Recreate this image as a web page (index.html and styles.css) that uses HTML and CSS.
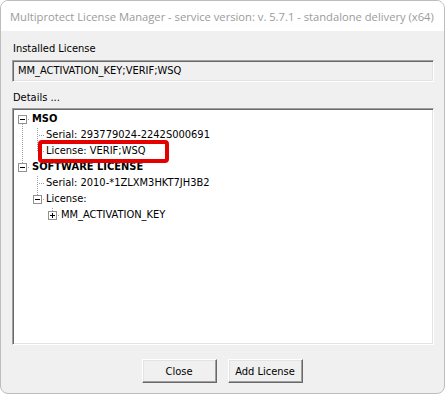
FILE: index.html
```html
<!DOCTYPE html>
<html lang="en">
<head>
	<meta charset="UTF-8">
	<title>Multiprotect License Manager</title>
	<link rel="stylesheet" href="styles.css">
</head>
<body>

<div class="window">
	<div class="titlebar">Multiprotect License Manager - service version: v. 5.7.1 - standalone delivery (x64)</div>

	<div class="content">
		<div class="caption">Installed License</div>
		<div class="field">MM_ACTIVATION_KEY;VERIF;WSQ</div>

		<div class="caption caption-details">Details ...</div>
		<div class="tree">
			<!-- MSO -->
			<div class="row">
				<span class="cell box-cell down"><span class="box minus"></span></span>
				<span class="label root">MSO</span>
			</div>
			<div class="row">
				<span class="cell v"></span>
				<span class="cell tee"></span>
				<span class="label">Serial: 293779024-2242S000691</span>
			</div>
			<div class="row">
				<span class="cell v"></span>
				<span class="cell ell"></span>
				<span class="label marked">License: VERIF;WSQ<span class="callout"></span></span>
			</div>

			<!-- SOFTWARE LICENSE -->
			<div class="row">
				<span class="cell box-cell up"><span class="box minus"></span></span>
				<span class="label root">SOFTWARE LICENSE</span>
			</div>
			<div class="row">
				<span class="cell"></span>
				<span class="cell tee"></span>
				<span class="label">Serial: 2010-*1ZLXM3HKT7JH3B2</span>
			</div>
			<div class="row">
				<span class="cell"></span>
				<span class="cell box-cell up"><span class="box minus"></span></span>
				<span class="label">License:</span>
			</div>
			<div class="row">
				<span class="cell"></span>
				<span class="cell"></span>
				<span class="cell box-cell up"><span class="box plus"></span></span>
				<span class="label">MM_ACTIVATION_KEY</span>
			</div>
		</div>

		<div class="buttons">
			<button>Close</button>
			<button>Add License</button>
		</div>
	</div>
</div>

</body>
</html>
```

FILE: styles.css
```css
:root {
	--dot: #a0a0a0;
	--face: #f0f0f0;
	--row-height: 16px;
	--cell-width: 15px;
	--ui-font: "DejaVu Sans Condensed", "Liberation Sans", sans-serif;
}

body {
	margin: 0;
	font-family: var(--ui-font);
	font-size: 11px;
	background: #fff;
}

.window {
	width: 445px;
	height: 394px;
	box-sizing: border-box;
	border: 1px solid #bdbdbd;
	border-radius: 8px;
	overflow: hidden;
	background: var(--face);
	display: flex;
	flex-direction: column;
}

.titlebar {
	height: 30px;
	flex: none;
	background: #fff;
	padding-left: 9px;
	display: flex;
	align-items: center;
	font-family: "Open Sans", sans-serif;
	font-size: 11.2px;
	color: #9b9b9b;
	white-space: nowrap;
}

.content {
	flex: 1;
	padding: 11px 10px 0 11px;
	display: flex;
	flex-direction: column;
}

.caption {
	line-height: 14px;
	margin-left: 1px;
}

.caption-details {
	margin-top: 9px;
}

/* sunken 3d border like the old windows controls */
.field, .tree {
	border-style: solid;
	border-width: 1px;
	border-color: #a0a0a0 #fff #fff #a0a0a0;
	box-shadow: inset 1px 1px 0 #696969, inset -1px -1px 0 #e3e3e3;
}

.field {
	margin-top: 4px;
	height: 22px;
	box-sizing: border-box;
	padding: 0 5px;
	line-height: 20px;
	background: var(--face);
}

.tree {
	margin-top: 3px;
	height: 237px;
	box-sizing: border-box;
	padding: 2px 2px;
	background: #fff;
}

.row {
	display: flex;
	height: var(--row-height);
	align-items: center;
}

.cell {
	flex: none;
	width: var(--cell-width);
	height: var(--row-height);
	display: flex;
	justify-content: center;
	align-items: center;
	background-repeat: no-repeat;
}

/* dotted connectors */
.v {
	background-image: repeating-linear-gradient(to bottom, var(--dot) 0 1px, transparent 1px 2px);
	background-position: 7px 1px;
	background-size: 1px 100%;
}

.tee, .ell {
	background-image:
		repeating-linear-gradient(to bottom, var(--dot) 0 1px, transparent 1px 2px),
		repeating-linear-gradient(to right, var(--dot) 0 1px, transparent 1px 2px);
	background-position: 7px 1px, 9px 8px;
}

.tee {
	background-size: 1px 100%, 6px 1px;
}

.ell {
	background-size: 1px 8px, 6px 1px;
}

.box-cell {
	background-image: repeating-linear-gradient(to right, var(--dot) 0 1px, transparent 1px 2px);
	background-position: 13px 8px;
	background-size: 2px 1px;
}

.box-cell.down {
	background-image:
		repeating-linear-gradient(to right, var(--dot) 0 1px, transparent 1px 2px),
		repeating-linear-gradient(to bottom, var(--dot) 0 1px, transparent 1px 2px);
	background-position: 13px 8px, 7px 13px;
	background-size: 2px 1px, 1px 3px;
}

.box-cell.up {
	background-image:
		repeating-linear-gradient(to right, var(--dot) 0 1px, transparent 1px 2px),
		repeating-linear-gradient(to bottom, var(--dot) 0 1px, transparent 1px 2px);
	background-position: 13px 8px, 7px 1px;
	background-size: 2px 1px, 1px 3px;
}

.box {
	width: 9px;
	height: 9px;
	box-sizing: border-box;
	border: 1px solid #919191;
	background:
		linear-gradient(#000, #000) center / 5px 1px no-repeat,
		#fff;
}

.box.plus {
	background:
		linear-gradient(#000, #000) center / 5px 1px no-repeat,
		linear-gradient(#000, #000) center / 1px 5px no-repeat,
		#fff;
}

.label {
	padding-left: 1px;
	line-height: var(--row-height);
	white-space: nowrap;
	color: #000;
}

.label.root {
	font-weight: bold;
	padding-left: 2px;
}

.marked {
	position: relative;
}

/* red annotation around the license entry */
.callout {
	position: absolute;
	left: -7px;
	top: -3px;
	width: 131px;
	height: 23px;
	box-sizing: border-box;
	border: 4px solid #e50000;
	border-radius: 4px;
}

.buttons {
	display: flex;
	justify-content: center;
	gap: 11px;
	margin-top: 14px;
	padding-right: 2px;
}

button {
	width: 75px;
	height: 24px;
	padding: 0;
	font-family: var(--ui-font);
	font-size: 11px;
	color: #000;
	background: var(--face);
	border-style: solid;
	border-width: 1px;
	border-color: #fff #696969 #696969 #fff;
	box-shadow: inset -1px -1px 0 #a0a0a0, inset 1px 1px 0 #e3e3e3;
	border-radius: 0;
}
```
